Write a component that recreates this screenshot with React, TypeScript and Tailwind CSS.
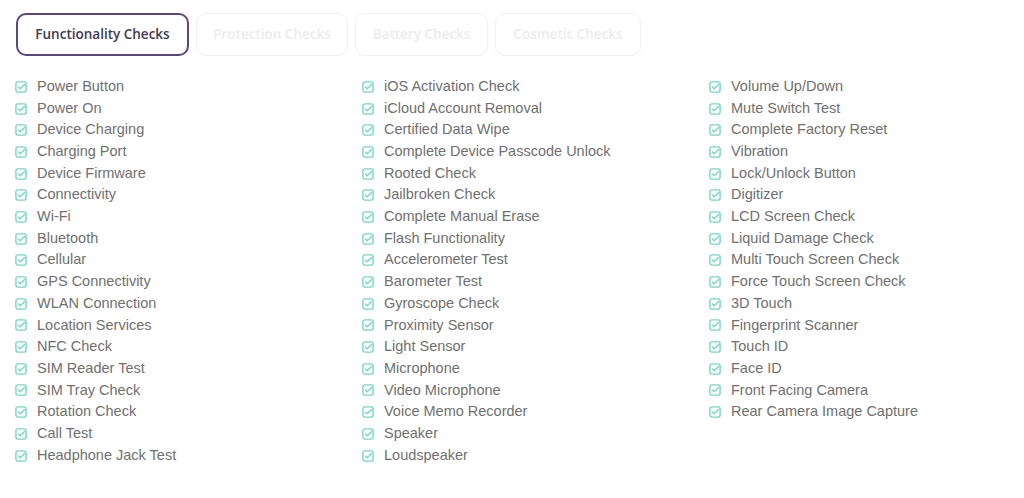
import React from "react";

const col1 = ["Power Button","Power On","Device Charging","Charging Port","Device Firmware","Connectivity","Wi-Fi","Bluetooth","Cellular","GPS Connectivity","WLAN Connection","Location Services","NFC Check","SIM Reader Test","SIM Tray Check","Rotation Check","Call Test","Headphone Jack Test"];
const col2 = ["iOS Activation Check","iCloud Account Removal","Certified Data Wipe","Complete Device Passcode Unlock","Rooted Check","Jailbroken Check","Complete Manual Erase","Flash Functionality","Accelerometer Test","Barometer Test","Gyroscope Check","Proximity Sensor","Light Sensor","Microphone","Video Microphone","Voice Memo Recorder","Speaker","Loudspeaker"];
const col3 = ["Volume Up/Down","Mute Switch Test","Complete Factory Reset","Vibration","Lock/Unlock Button","Digitizer","LCD Screen Check","Liquid Damage Check","Multi Touch Screen Check","Force Touch Screen Check","3D Touch","Fingerprint Scanner","Touch ID","Face ID","Front Facing Camera","Rear Camera Image Capture"];

function CheckIcon() {
  return (
    <svg width="12" height="12" viewBox="0 0 12 12" fill="none" className="shrink-0">
      <rect x="0.9" y="0.9" width="10.2" height="10.2" rx="2" stroke="#74d6c3" strokeWidth="1.4" />
      <path d="M3.4 6.1 L5.2 7.8 L9.6 3.4" stroke="#74d6c3" strokeWidth="1.4" strokeLinecap="round" strokeLinejoin="round" />
    </svg>
  );
}

function Column({ items }: { items: string[] }) {
  return (
    <div className="flex flex-col">
      {items.map((t) => (
        <div key={t} className="flex items-center h-[21.7px] gap-[10px]">
          <CheckIcon />
          <span className="text-[14.5px] text-[#707070] whitespace-nowrap" style={{ fontFamily: '"Liberation Sans", Arial, sans-serif' }}>{t}</span>
        </div>
      ))}
    </div>
  );
}

export default function App() {
  const tabFont = { fontFamily: '"Open Sans", "Noto Sans", sans-serif' };
  return (
    <div className="w-[1024px] h-[498px] bg-white overflow-hidden">
      <div className="flex gap-[7px] pl-[16px] pt-[13px]">
        <div className="w-[173px] h-[43px] rounded-[10px] border-2 border-[#5d4580] flex items-center justify-center text-[13.5px] font-semibold text-[#3f3a55]" style={tabFont}>Functionality Checks</div>
        <div className="w-[152px] h-[43px] rounded-[10px] border border-[#efeff1] flex items-center justify-center text-[13.5px] font-semibold text-[#ececee]" style={tabFont}>Protection Checks</div>
        <div className="w-[133px] h-[43px] rounded-[10px] border border-[#efeff1] flex items-center justify-center text-[13.5px] font-semibold text-[#ececee]" style={tabFont}>Battery Checks</div>
        <div className="w-[146px] h-[43px] rounded-[10px] border border-[#efeff1] flex items-center justify-center text-[13.5px] font-semibold text-[#ececee]" style={tabFont}>Cosmetic Checks</div>
      </div>
      <div className="grid grid-cols-[347px_347px_1fr] pl-[15px] mt-[20px]">
        <Column items={col1} />
        <Column items={col2} />
        <Column items={col3} />
      </div>
    </div>
  );
}
